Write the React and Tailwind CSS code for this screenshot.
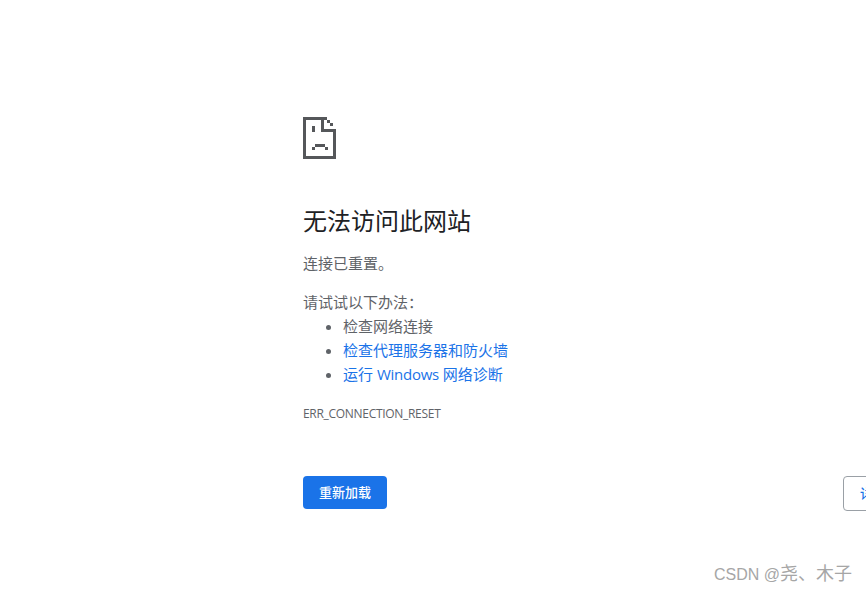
const cjk = { fontFamily: '"Open Sans", "Noto Sans CJK SC", sans-serif' };
const mark = { fontFamily: '"Liberation Sans", "Noto Sans CJK SC", sans-serif' };

const SadFile = () => (
  <svg width="33" height="42" viewBox="0 0 33 42" fill="#55575a" shapeRendering="crispEdges">
    {/* outline */}
    <rect x="0" y="0" width="3" height="42" />
    <rect x="0" y="0" width="24" height="3" />
    <rect x="0" y="39" width="33" height="3" />
    <rect x="30" y="12" width="3" height="30" />
    {/* dog-ear */}
    <rect x="24" y="3" width="3" height="3" />
    <rect x="27" y="6" width="3" height="3" />
    <rect x="18" y="0" width="3" height="15" />
    <rect x="18" y="12" width="15" height="3" />
    {/* face */}
    <rect x="9" y="9" width="3" height="6" />
    <rect x="12" y="27" width="10" height="3" />
    <rect x="9" y="30" width="3" height="3" />
    <rect x="22" y="30" width="3" height="3" />
  </svg>
);

export default function App() {
  return (
    <div className="relative flex h-[592px] w-[866px] flex-col overflow-hidden bg-white pl-[303px] pt-[117px] text-[15px] text-[#5f6368]" style={cjk}>
      <SadFile />

      <h1 className="mt-[44px] text-[24px] font-normal leading-[36px] text-[#202124]">无法访问此网站</h1>
      <p className="mt-[12px] leading-[24px]">连接已重置。</p>

      <p className="mt-[15px] leading-[24px]">请试试以下办法：</p>
      <ul className="list-disc pl-[40px] leading-[24px]">
        <li>检查网络连接</li>
        <li><a className="text-[#1a73e8]">检查代理服务器和防火墙</a></li>
        <li><a className="text-[#1a73e8]">运行 <span className="tracking-[-0.25px]">Windows</span> 网络诊断</a></li>
      </ul>

      <div className="mt-[19px] text-[12px] leading-[18px] tracking-[-0.3px]">ERR_CONNECTION_RESET</div>

      <div className="mt-[53px] flex w-[626px] items-start justify-between">
        <button className="h-[33px] w-[84px] rounded bg-[#1a73e8] text-[13px] font-medium text-white">重新加载</button>
        <button className="h-[35px] w-[86px] shrink-0 rounded border border-[#9aa0a6] bg-white text-[13px] font-medium text-[#1a73e8]">详细信息</button>
      </div>

      <div className="absolute left-[714px] top-[561px] text-[18px] leading-[26px] text-[#a6a6a6]" style={mark}>
        <span className="text-[16px]">CSDN @</span>尧、木子
      </div>
    </div>
  );
}
